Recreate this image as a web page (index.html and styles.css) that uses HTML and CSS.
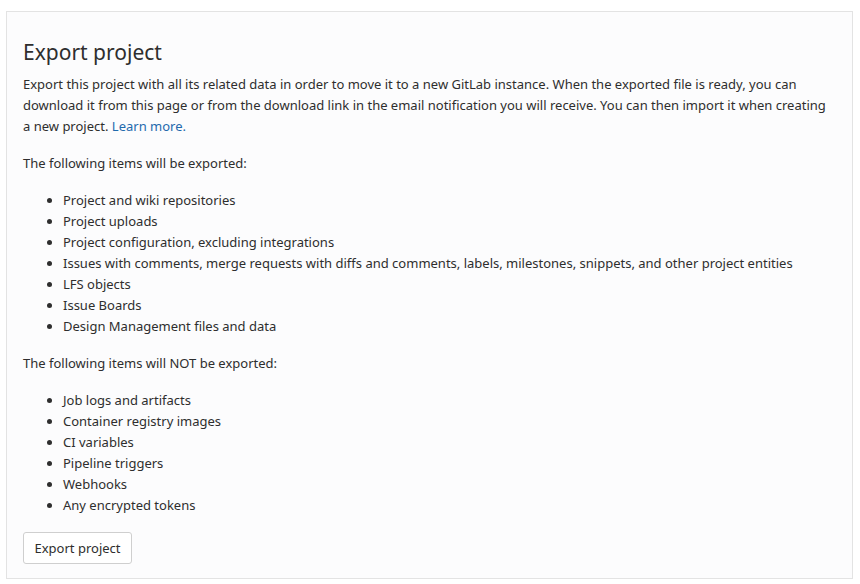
FILE: index.html
```html
<!DOCTYPE html>
<html>
<head>
<meta charset="utf-8">
<link rel="stylesheet" href="styles.css">
</head>
<body>
<section class="panel">
  <h4 class="title">Export project</h4>
  <p>Export this project with all its related data in order to move it to a new GitLab instance. When the exported file is ready, you can download it from this page or from the download link in the email notification you will receive. You can then import it when creating a new project. <a href="#">Learn more.</a></p>
  <p>The following items will be exported:</p>
  <ul>
    <li>Project and wiki repositories</li>
    <li>Project uploads</li>
    <li>Project configuration, excluding integrations</li>
    <li>Issues with comments, merge requests with diffs and comments, labels, milestones, snippets, and other project entities</li>
    <li>LFS objects</li>
    <li>Issue Boards</li>
    <li>Design Management files and data</li>
  </ul>
  <p>The following items will NOT be exported:</p>
  <ul>
    <li>Job logs and artifacts</li>
    <li>Container registry images</li>
    <li>CI variables</li>
    <li>Pipeline triggers</li>
    <li>Webhooks</li>
    <li>Any encrypted tokens</li>
  </ul>
  <button class="btn" type="button">Export project</button>
</section>
</body>
</html>
```
FILE: styles.css
```css
html, body {
  margin: 0;
  padding: 0;
  background: #ffffff;
}
body {
  padding: 11px 6px 0 6px;
  font-family: "Noto Sans", "Open Sans", sans-serif;
  font-size: 13px;
  line-height: 21px;
  color: #2e2e2e;
}
.panel {
  width: 847px;
  box-sizing: border-box;
  border: 1px solid #e3e3e3;
  background: #fcfcfd;
  padding: 16px 16px 14px 16px;
}
.title {
  font-size: 21px;
  font-weight: 400;
  line-height: 25px;
  margin: 12px 0 9px 0;
  color: #2e2e2e;
}
p {
  margin: 0 0 16px 0;
}
ul {
  margin: 0 0 16px 0;
  padding-left: 40px;
}
a {
  color: #1f6aad;
  text-decoration: none;
}
.btn {
  font-family: inherit;
  font-size: 13px;
  color: #2e2e2e;
  background: #ffffff;
  border: 1px solid #cfcfcf;
  border-radius: 3px;
  height: 32px;
  width: 109px;
  padding: 0;
  line-height: 20px;
  display: block;
}
```
